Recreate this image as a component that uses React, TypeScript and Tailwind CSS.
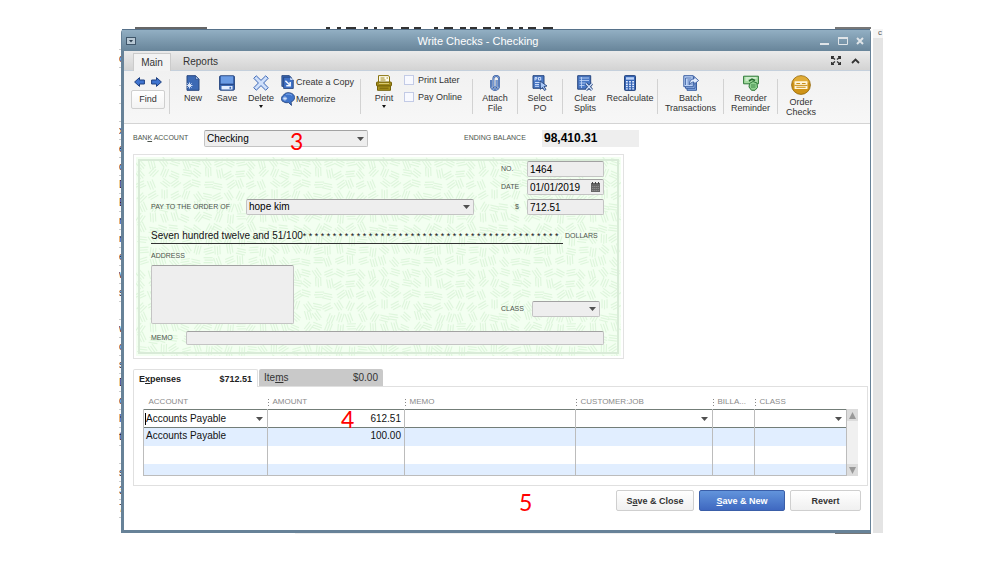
import type { ReactNode } from 'react';

const edgeLetters = [
  '', 'c', '', '', '', 'x', 'e', 'd', 'D', 'E', 'n', 'n', 'e', 'w', 's', '', 'w', 'c', 's', 'D', 'd', 'h', 't', '', 's', '3', '7',
];

// Repeatable scatter of three-line groups for the security paper background
const TILE = 110;
const CELL = 11;
const strokeGroups = Array.from({ length: 100 }, (_, i) => {
  const noise = (n: number) => Math.abs(Math.sin(i * 12.9898 + n * 78.233) * 43758.5453) % 1;
  return {
    x: (i % 10) * CELL + 4 + noise(1) * 4,
    y: Math.floor(i / 10) * CELL + 4 + noise(2) * 4,
    angle: Math.floor(noise(3) * 180),
  };
});

function CheckPattern() {
  return (
    <svg className="absolute inset-0 w-full h-full" aria-hidden="true">
      <defs>
        <pattern id="check-pattern" width={TILE} height={TILE} patternUnits="userSpaceOnUse">
          <rect width={TILE} height={TILE} fill="#f3fff1" />
          {strokeGroups.map(({ x, y, angle }, i) => (
            <g key={i} transform={`translate(${x} ${y}) rotate(${angle})`} stroke="#def6dc" strokeWidth="1.1">
              <path d="M-5 -2.5H4M-4 0H5M-5 2.5H4" />
            </g>
          ))}
        </pattern>
      </defs>
      <rect width="100%" height="100%" fill="url(#check-pattern)" />
    </svg>
  );
}

function Caret({ className = '' }: { className?: string }) {
  return (
    <svg className={className} width="7" height="4" viewBox="0 0 7 4" aria-hidden="true">
      <path d="M0 0h7L3.5 4z" fill="#505050" />
    </svg>
  );
}

interface SelectBoxProps {
  id: string;
  label?: string;
  value: string;
  className: string;
  plain?: boolean;
}

function SelectBox({ id, label, value, className, plain }: SelectBoxProps) {
  return (
    <div className={`relative ${className}`}>
      <select
        id={id}
        aria-label={label}
        defaultValue={value}
        className={`block w-full h-full appearance-none text-[10px] leading-3 outline-none ${
          plain ? 'bg-transparent' : 'px-0.5 bg-[#eee] border border-[#c4c4c4] border-t-[#a2a2a2] rounded-xs'
        }`}
      >
        <option value={value}>{value}</option>
      </select>
      <Caret className="absolute right-1 top-1/2 -translate-y-1/2 pointer-events-none" />
    </div>
  );
}

const fieldClass =
  'block h-4 px-0.5 text-[10px] leading-3 bg-[#eee] border border-[#c4c4c4] border-t-[#a2a2a2] rounded-xs outline-none';
const labelClass = 'text-[7px] text-[#4c544c] whitespace-nowrap';

interface ToolButtonProps {
  icon: ReactNode;
  lines: string[];
  className: string;
  menu?: boolean;
}

function ToolButton({ icon, lines, className, menu }: ToolButtonProps) {
  return (
    <button type="button" className={`shrink-0 flex flex-col items-center ${className}`}>
      {icon}
      <span className="flex flex-col items-center mt-0.5 text-[9px] leading-[10px] text-[#333] whitespace-nowrap">
        {lines.map((line) => (
          <span key={line}>{line}</span>
        ))}
      </span>
      {menu && (
        <svg className="mt-0.5" width="4" height="3" viewBox="0 0 4 3" aria-hidden="true">
          <path d="M0 0h4L2 3z" fill="#111" />
        </svg>
      )}
    </button>
  );
}

function Divider() {
  return <div className="shrink-0 w-px h-[35px] mt-1 bg-[#d2d2d2]" />;
}

function Icon({ children, size = 16 }: { children: ReactNode; size?: number }) {
  return (
    <svg className="shrink-0" width={size} height={size} viewBox="0 0 16 16" fill="none" aria-hidden="true">
      {children}
    </svg>
  );
}

function NewIcon() {
  return (
    <Icon>
      <path d="M2 .7h8.5L14 4.3v11H2z" fill="#3c69b4" stroke="#27467f" />
      <path d="M10.5 .7v3.6H14z" fill="#a9c4ee" stroke="#27467f" strokeWidth=".7" />
      <path d="M4.500 7.500v6M1.500 10.500h6M2.400 8.400l4.200 4.200M6.600 8.400l-4.200 4.200" stroke="#e6efff" strokeWidth=".9" />
    </Icon>
  );
}

function SaveIcon() {
  return (
    <Icon>
      <rect x=".6" y=".8" width="14.8" height="14.4" rx="1" fill="#3c69b4" stroke="#27467f" />
      <path d="M2 1.3h12v7.400H2z" fill="#6a9be4" />
      <path d="M1 9.4h14" stroke="#274a8c" strokeWidth="1.2" />
      <path d="M2.500 11h11v3.500h-11z" fill="#e3edff" />
      <path d="M10.500 11.800h1.6v2h-1.600z" fill="#3c69b4" />
    </Icon>
  );
}

function DeleteIcon() {
  return (
    <Icon>
      <path
        d="M3.3 .8 8 5.4 12.7 .8l2.5 2.5L10.6 8l4.6 4.7-2.5 2.5L8 10.6l-4.7 4.6-2.5-2.5L5.4 8 .8 3.3z"
        fill="#cfe0fb"
        stroke="#3a65b5"
        strokeLinejoin="round"
      />
    </Icon>
  );
}

function CopyIcon() {
  return (
    <Icon size={14}>
      <path d="M1 .7h8.500l2 2V13H1z" fill="#3c69b4" stroke="#27467f" />
      <path d="M3 2.500h7.500L14 5.700v9.700H3z" fill="#3f70c4" stroke="#27467f" />
      <path d="M10.500 2.500v3.200H14z" fill="#c8dbfa" />
      <path d="M5 6.500l5 5M10.500 8v4.200H6" stroke="#f2f7ff" strokeWidth="1.700" />
    </Icon>
  );
}

function MemorizeIcon() {
  return (
    <Icon size={14}>
      <path
        d="M8 .8C12.500 .8 15.500 3 15.500 6.300 15.500 9 13.500 10.800 11.500 11.300L12 15.300 8.500 12C6.500 12.500 4.500 12.300 3.300 11.300 1.300 11 .4 9.500 .5 7.500 .6 5.500 1.800 4.300 3 3.500 4 1.800 5.800 .8 8 .8z"
        fill="#3f74ca"
        stroke="#27467f"
      />
      <path d="M6 2.800c2-.8 5-.4 6.500 1" stroke="#8db4f0" />
      <path d="M4.500 5v5M2 7.500h5M2.800 5.800l3.400 3.400M6.200 5.800 2.800 9.200" stroke="#dbe8ff" strokeWidth=".9" />
    </Icon>
  );
}

function PrintIcon() {
  return (
    <Icon>
      <path d="M2.500 .6h10L13.500 2v5.500h-11z" fill="#fffdf0" stroke="#8a7410" />
      <path d="M4.500 3h4M4.500 5h5M10.500 3h1.500" stroke="#a08a1a" />
      <rect x=".5" y="7" width="15" height="4" rx=".8" fill="#a08a1a" stroke="#75620a" />
      <path d="M3 8.500h10" stroke="#e6d98a" strokeWidth=".8" />
      <path d="M1.500 11h13v4.300h-13z" fill="#a8921c" stroke="#75620a" />
      <path d="M3.500 13.200h9" stroke="#75620a" />
    </Icon>
  );
}

function AttachIcon() {
  const clip = 'M4 5v6a4 4 0 0 0 8 0V3.800a2.800 2.800 0 0 0-5.600 0V11a1.600 1.600 0 0 0 3.200 0V5';
  return (
    <Icon>
      <path d={clip} stroke="#2f5394" strokeWidth="1.900" />
      <path d={clip} stroke="#8fb4ee" strokeWidth=".8" />
    </Icon>
  );
}

function SelectIcon() {
  return (
    <Icon>
      <path d="M1 .7h11v12.600H1z" fill="#4a78c4" stroke="#27467f" />
      <path d="M3 5.500V2.500h1.800v1.500H3M6.500 2.500h2.200v2.500H6.500zM3 7.500h7M3 9.500h4M3 11.300h4" stroke="#d7e5ff" strokeWidth=".9" />
      <path d="M8 6l7 5-3 .5 2 3-1.600 1-1.900-3.100-2 2z" fill="#a9c8f7" stroke="#27467f" strokeWidth=".9" />
    </Icon>
  );
}

function ClearIcon() {
  return (
    <Icon>
      <path d="M.7 .7h13v13.500h-13z" fill="#4a78c4" stroke="#27467f" />
      <path d="M2.500 3h9.500M2.500 5.500h9.500M2.500 8h6M2.500 10.500h5M4.500 2v11" stroke="#c3d8fa" strokeWidth=".8" />
      <path d="M9 8.500l6 6.500M15 8.500 9 15" stroke="#27467f" strokeWidth="2.800" />
      <path d="M9 8.500l6 6.500M15 8.500 9 15" stroke="#d5e4fc" strokeWidth="1.300" />
    </Icon>
  );
}

function CalculatorIcon() {
  return (
    <Icon>
      <rect x="2.500" y=".6" width="11" height="14.800" rx=".8" fill="#3665b6" stroke="#27467f" />
      <path d="M4 2.200h8v2.500H4z" fill="#b9d1f8" />
      <path d="M4.900 6v8.500M8 6v8.500M11.100 6v8.500" stroke="#e0ebff" strokeWidth="1.800" strokeDasharray="1.500 .9" />
    </Icon>
  );
}

function BatchIcon() {
  return (
    <Icon>
      <path d="M4 4h9.500v11.300H4z" fill="#82a8e4" stroke="#3a5ea0" />
      <path d="M2.500 2.300H12v11H2.500z" fill="#9dbdf0" stroke="#3a5ea0" />
      <path d="M.8 .7h9.500v11H.8z" fill="#bcd3f7" stroke="#3a5ea0" />
      <path d="M2.500 3v7M2.500 3h6M4.500 5h4M4.500 7h3M4.500 9h5" stroke="#3a5ea0" strokeWidth=".8" />
      <path d="M6.500 9.500C6.500 5.500 8.500 4 11 4V1.500l4.600 4L11 9.300V7C9 7 8 7.500 6.500 9.500z" fill="#e2edff" stroke="#3a5ea0" strokeWidth=".9" />
    </Icon>
  );
}

function ReorderIcon() {
  return (
    <Icon>
      <path d="M.6 1.200h14.800v7.600H.6z" fill="#a5dba1" stroke="#2f7a39" />
      <path d="M2.500 3h11M2.500 5h3" stroke="#fff" strokeWidth=".9" />
      <path d="M6 6l3-1.800 3 1.300" stroke="#246b30" strokeWidth="1.500" />
      <path d="M6.500 8.500 10 6.500l4 1.500.5 4.500-2.500 2.800H8.500L6 12z" fill="#8fd08f" stroke="#2f7a39" />
      <path d="M8 10h4.500M8 12h4.500" stroke="#3f8a48" />
    </Icon>
  );
}

function OrderIcon() {
  return (
    <Icon size={20}>
      <circle cx="8" cy="8" r="7.500" fill="#cf9316" stroke="#96690a" strokeWidth=".7" />
      <path d="M1.500 6a6.700 6.700 0 0 1 13 0z" fill="#e0ac38" />
      <rect x="2.800" y="5" width="10.400" height="6.200" rx=".5" fill="#fff6da" />
      <path d="M4.300 6.800h3M8.700 6.800h3M2.800 8.300h10.400M4.300 9.800h7.400" stroke="#c98f17" strokeWidth=".8" />
    </Icon>
  );
}

function Arrow({ flip }: { flip?: boolean }) {
  return (
    <svg className={flip ? '-scale-x-100' : ''} width="11" height="10" viewBox="0 0 11 10" aria-hidden="true">
      <path d="M.6 5 5.500 .6v2.400h4.900v4H5.500v2.400z" fill="#3f74d0" stroke="#1f4080" strokeLinejoin="round" />
    </svg>
  );
}

function Toolbar() {
  return (
    <div className="flex items-start h-[53px] pt-1 pl-[7px] bg-linear-to-b from-[#f1f1f1] to-[#f7f7f7] border-b border-[#d4d4d4]">
      <div className="shrink-0 w-[34px] pt-px">
        <div className="flex justify-between h-3 px-[3px]">
          <button type="button" aria-label="Previous"><Arrow /></button>
          <button type="button" aria-label="Next"><Arrow flip /></button>
        </div>
        <button
          type="button"
          className="block w-full h-[19px] mt-0.5 text-[9px] text-[#333] bg-linear-to-b from-white to-[#f3f3f3] border border-[#cfcfcf] rounded-xs"
        >
          Find
        </button>
      </div>
      <div className="w-1" />
      <Divider />
      <ToolButton className="w-[34px] ml-1.5" icon={<NewIcon />} lines={['New']} />
      <ToolButton className="w-[34px]" icon={<SaveIcon />} lines={['Save']} />
      <ToolButton className="w-[34px]" icon={<DeleteIcon />} lines={['Delete']} menu />
      <div className="shrink-0 flex flex-col gap-[3px] w-[79px] ml-[3px] text-[9px] leading-[14px] text-[#333] whitespace-nowrap">
        <button type="button" className="flex items-center gap-px"><CopyIcon />Create a Copy</button>
        <button type="button" className="flex items-center gap-px"><MemorizeIcon />Memorize</button>
      </div>
      <Divider />
      <ToolButton className="w-[34px] ml-1.5" icon={<PrintIcon />} lines={['Print']} menu />
      <div className="shrink-0 flex flex-col gap-[7px] w-[68px] ml-[3px] text-[9px] leading-[10px] text-[#333] whitespace-nowrap">
        <label className="flex items-center gap-1">
          <input type="checkbox" className="appearance-none size-2.5 bg-[#f8f9ff] border border-[#c3cbe6]" />
          Print Later
        </label>
        <label className="flex items-center gap-1">
          <input type="checkbox" className="appearance-none size-2.5 bg-[#f8f9ff] border border-[#c3cbe6]" />
          Pay Online
        </label>
      </div>
      <Divider />
      <ToolButton className="w-11" icon={<AttachIcon />} lines={['Attach', 'File']} />
      <Divider />
      <ToolButton className="w-11" icon={<SelectIcon />} lines={['Select', 'PO']} />
      <Divider />
      <ToolButton className="w-11" icon={<ClearIcon />} lines={['Clear', 'Splits']} />
      <ToolButton className="w-[46px] mr-1" icon={<CalculatorIcon />} lines={['Recalculate']} />
      <Divider />
      <ToolButton className="w-[65px]" icon={<BatchIcon />} lines={['Batch', 'Transactions']} />
      <Divider />
      <ToolButton className="w-[53px]" icon={<ReorderIcon />} lines={['Reorder', 'Reminder']} />
      <Divider />
      <ToolButton className="w-[46px]" icon={<OrderIcon />} lines={['Order', 'Checks']} />
    </div>
  );
}

function CheckForm() {
  return (
    <div className="w-full max-w-[491px] mt-[7px] p-0.5 bg-white border border-[#e2e2e2]">
      <div className="relative p-0.5">
        <CheckPattern />
        <div className="relative pl-[11px] pr-[13px] pb-[7px] border-2 border-[#d9ebd8]">
          <div className="flex justify-end items-center">
            <label htmlFor="check-no" className={`w-[26px] ${labelClass}`}>NO.</label>
            <input id="check-no" defaultValue="1464" className={`w-[77px] ${fieldClass}`} />
          </div>
          <div className="flex justify-end items-center mt-0.5">
            <label htmlFor="check-date" className={`w-[26px] ${labelClass}`}>DATE</label>
            <div className="relative">
              <input id="check-date" defaultValue="01/01/2019" className={`w-[77px] ${fieldClass}`} />
              <svg className="absolute right-1 top-[3px]" width="9" height="10" viewBox="0 0 9 10" aria-hidden="true">
                <path d="M0 1h9v9H0z" fill="#666" />
                <path d="M1.500 0v2M4.500 0v2M7.500 0v2" stroke="#444" />
                <path d="M1 4.500h7M1 6.500h7M1 8.500h7" stroke="#999" strokeWidth=".7" strokeDasharray="1.500 .5" />
              </svg>
            </div>
          </div>
          <div className="flex items-center mt-1">
            <label htmlFor="payee" className={`w-[95px] ${labelClass}`}>PAY TO THE ORDER OF</label>
            <SelectBox id="payee" value="hope kim" className="flex-1 h-4" />
            <label htmlFor="check-amount" className={`w-[53px] pr-2 text-right ${labelClass}`}>$</label>
            <input id="check-amount" defaultValue="712.51" className={`w-[77px] ${fieldClass}`} />
          </div>
          <div className="flex items-start mt-[13px]">
            <div className="flex items-end w-[412px] h-4 whitespace-nowrap border-b border-[#333] text-[10px] leading-[14px] text-[#111]">
              <span>Seven hundred twelve and 51/100</span>
              <span className="text-[9px]">{'* '.repeat(43)}</span>
            </div>
            <span className={`ml-0.5 leading-4 ${labelClass}`}>DOLLARS</span>
          </div>
          <label htmlFor="address" className={`block mt-[5px] leading-[14px] ${labelClass}`}>ADDRESS</label>
          <div className="flex items-end justify-between mt-0.5">
            <textarea
              id="address"
              className="block w-[143px] h-[59px] resize-none bg-[#eee] border border-[#c4c4c4] border-t-[#a2a2a2] rounded-xs outline-none"
            />
            <div className="flex items-center mb-[7px] mr-1">
              <label htmlFor="check-class" className={`w-[31px] ${labelClass}`}>CLASS</label>
              <SelectBox id="check-class" value="" className="w-[68px] h-4" />
            </div>
          </div>
          <div className="flex items-center mt-[7px]">
            <label htmlFor="memo" className={`w-[35px] ${labelClass}`}>MEMO</label>
            <input
              id="memo"
              className="block flex-1 h-3.5 bg-[#eee] border border-[#c4c4c4] border-t-[#a2a2a2] rounded-xs outline-none"
            />
          </div>
        </div>
      </div>
    </div>
  );
}

function HeaderCell({ children, first }: { children: ReactNode; first?: boolean }) {
  return (
    <th scope="col" className="p-0 align-middle text-left font-normal text-[8px] leading-[14px] text-[#8a8a8a]">
      <div className="flex items-center">
        {first ? (
          <span className="w-[5px]" />
        ) : (
          <span className="flex flex-col gap-0.5 mr-1">
            <span className="size-px bg-[#888]" />
            <span className="size-px bg-[#888]" />
            <span className="size-px bg-[#888]" />
          </span>
        )}
        {children}
      </div>
    </th>
  );
}

function ExpensesTable() {
  const cell = 'p-0 border-x border-[#bcbcbc]';

  return (
    <div className="flex pt-2 px-[9px] pb-[9px] border border-t-0 border-[#e0e0e0]">
      <table className="flex-1 table-fixed border-collapse text-[10px] leading-3 text-[#111]">
        <colgroup>
          <col className="w-[124px]" />
          <col className="w-[137px]" />
          <col />
          <col className="w-[137px]" />
          <col className="w-[42px]" />
          <col className="w-[92px]" />
        </colgroup>
        <thead>
          <tr>
            <HeaderCell first>ACCOUNT</HeaderCell>
            <HeaderCell>AMOUNT</HeaderCell>
            <HeaderCell>MEMO</HeaderCell>
            <HeaderCell>CUSTOMER:JOB</HeaderCell>
            <HeaderCell>BILLA...</HeaderCell>
            <HeaderCell>CLASS</HeaderCell>
          </tr>
        </thead>
        <tbody>
          <tr className="h-[18px] border border-[#737d78]">
            <td className={cell}>
              <div className="flex items-center pl-px">
                <span className="w-px h-3 bg-black" />
                <SelectBox id="row-account" label="Account" value="Accounts Payable" className="flex-1 h-3" plain />
              </div>
            </td>
            <td className={cell}>
              <input
                aria-label="Amount"
                defaultValue="612.51"
                className="block w-full h-3 pr-[3px] text-right bg-transparent outline-none"
              />
            </td>
            <td className={cell}>
              <input aria-label="Memo" className="block w-full h-3 bg-transparent outline-none" />
            </td>
            <td className={cell}>
              <SelectBox id="row-customer" label="Customer:Job" value="" className="h-3" plain />
            </td>
            <td className={cell} />
            <td className={cell}>
              <SelectBox id="row-class" label="Class" value="" className="h-3" plain />
            </td>
          </tr>
          <tr className="h-[18px] bg-[#e1eeff]">
            <td className={`${cell} pl-0.5 pb-0.5`}>Accounts Payable</td>
            <td className={`${cell} pr-[3px] pb-0.5 text-right`}>100.00</td>
            <td className={cell} />
            <td className={cell} />
            <td className={cell} />
            <td className={cell} />
          </tr>
          <tr className="h-[18px]">
            <td className={cell} />
            <td className={cell} />
            <td className={cell} />
            <td className={cell} />
            <td className={cell} />
            <td className={cell} />
          </tr>
          <tr className="h-3 bg-[#e1eeff] border-b border-[#bcbcbc]">
            <td className={cell} />
            <td className={cell} />
            <td className={cell} />
            <td className={cell} />
            <td className={cell} />
            <td className={cell} />
          </tr>
        </tbody>
      </table>
      <div className="flex flex-col justify-between w-[11px] mt-3.5 bg-[#f0f0f0]">
        <button type="button" aria-label="Scroll up" className="flex items-center justify-center h-3 bg-[#dcdcdc]">
          <svg width="7" height="7" viewBox="0 0 7 7"><path d="M3.500 0 7 7H0z" fill="#999" /></svg>
        </button>
        <button type="button" aria-label="Scroll down" className="flex items-center justify-center h-3 bg-[#dcdcdc]">
          <svg width="7" height="7" viewBox="0 0 7 7"><path d="M3.500 7 7 0H0z" fill="#999" /></svg>
        </button>
      </div>
    </div>
  );
}

function CheckWindow() {
  return (
    <div className="relative flex-1 min-w-0 bg-white border-l-3 border-b-3 border-r border-[#678298] rounded-t-sm">
      <div className="flex items-center h-[22px] -ml-0.5 pl-1 pr-1.5 bg-linear-to-b from-[#92afc3] to-[#68859a] border-t border-[#56718a]">
        <button type="button" aria-label="Window menu">
          <svg width="10" height="8" viewBox="0 0 10 8">
            <rect x=".5" y=".5" width="9" height="7" fill="#b8c8d4" stroke="#3f566a" />
            <path d="M3 3h4L5 5.500z" fill="#2c3f50" />
          </svg>
        </button>
        <h1 className="flex-1 text-center text-[11px] leading-4 text-white">Write Checks - Checking</h1>
        <div className="flex items-center gap-2">
          <button type="button" aria-label="Minimize">
            <svg width="10" height="8" viewBox="0 0 10 8"><path d="M0 7h9" stroke="#dfe4e8" strokeWidth="2" /></svg>
          </button>
          <button type="button" aria-label="Maximize">
            <svg width="10" height="8" viewBox="0 0 10 8">
              <path d="M.5 1h9v6.500h-9z" fill="none" stroke="#dfe4e8" />
              <path d="M0 1h10" stroke="#dfe4e8" strokeWidth="2" />
            </svg>
          </button>
          <button type="button" aria-label="Close">
            <svg width="8" height="8" viewBox="0 0 8 8"><path d="M1 1l6 6M7 1 1 7" stroke="#dfe4e8" strokeWidth="2" /></svg>
          </button>
        </div>
      </div>

      {/* Ribbon tabs */}
      <div className="flex items-end h-5 pl-[9px] pr-2.5 bg-linear-to-b from-[#ebebeb] to-[#d3d3d3] border-b border-[#c5d0dc] text-[10px] text-[#333]">
        <button type="button" className="w-[38px] h-[18px] -mb-px bg-[#f3f3f3] border-x border-t border-[#cbcbcb]">
          Main
        </button>
        <button type="button" className="h-[18px] ml-3">Reports</button>
        <div className="flex-1" />
        <div className="flex items-center gap-2.5 h-full">
          <button type="button" aria-label="Expand">
            <svg width="10" height="9" viewBox="0 0 10 9" fill="none" stroke="#333" strokeWidth="1.300">
              <path d="M.6 3V.6H3M7 .6h2.400V3M9.400 6v2.400H7M3 8.400H.6V6M1 1l3 2.500M9 1 6 3.500M9 8 6 5.500M1 8l3-2.500" />
            </svg>
          </button>
          <button type="button" aria-label="Collapse">
            <svg width="9" height="6" viewBox="0 0 9 6"><path d="M1 5l3.500-3.500L8 5" fill="none" stroke="#333" strokeWidth="1.800" /></svg>
          </button>
        </div>
      </div>

      <Toolbar />

      <div className="pt-1.5 pl-[9px] pr-0.5 pb-[19px]">
        <div className="flex items-center">
          <label htmlFor="bank-account" className={`w-[71px] ${labelClass}`}>BAN<u>K</u> ACCOUNT</label>
          <SelectBox id="bank-account" value="Checking" className="w-[164px] h-[17px]" />
          <span className={`ml-24 w-[78px] ${labelClass}`}>ENDING BALANCE</span>
          <output className="w-[97px] h-[17px] pl-0.5 bg-[#eee] text-[12px] leading-4 font-bold text-black">98,410.31</output>
        </div>

        <CheckForm />

        {/* Expense / item tabs */}
        <div className="flex h-[18px] mt-2.5 text-[10px] leading-3 text-[#333]">
          <button
            type="button"
            className="flex items-center justify-between w-[125px] px-[5px] border border-b-0 border-[#e0e0e0] rounded-t-xs text-[9px] font-bold text-[#222]"
          >
            <span>E<u>x</u>penses</span>
            <span>$712.51</span>
          </button>
          <div className="flex flex-1 pl-px border-b border-[#e0e0e0]">
            <button type="button" className="flex items-center justify-between w-[124px] px-[5px] bg-[#c9c9c9] rounded-t-xs">
              <span>Ite<u>m</u>s</span>
              <span>$0.00</span>
            </button>
          </div>
        </div>
        <ExpensesTable />

        <div className="flex justify-end gap-[5px] mt-1 pr-[7px] text-[9px] leading-3 font-bold text-[#333]">
          <button type="button" className="w-[78px] h-[21px] bg-linear-to-b from-white to-[#f0f0f0] border border-[#cfcfcf] rounded-xs">
            S<u>a</u>ve &amp; Close
          </button>
          <button type="button" className="w-[86px] h-[21px] bg-linear-to-b from-[#6294dc] to-[#3f68c0] border border-[#3a5ea8] rounded-xs text-white">
            <u>S</u>ave &amp; New
          </button>
          <button type="button" className="w-[71px] h-[21px] bg-linear-to-b from-white to-[#f0f0f0] border border-[#cfcfcf] rounded-xs">
            Revert
          </button>
        </div>
      </div>

      {/* Step numbers laid over the window */}
      <span className="absolute left-[166px] top-[98px] font-[Lato,sans-serif] text-[23px] leading-7 text-[#f00]">3</span>
      <span className="absolute left-[217px] top-[376px] font-[Lato,sans-serif] text-[23px] leading-7 text-[#f00]">4</span>
      <span className="absolute left-[395px] top-[459px] font-[Lato,sans-serif] text-[23px] leading-7 text-[#f00]">5</span>
    </div>
  );
}

export default function App() {
  return (
    <div className="min-h-screen pl-[119px] pr-[116px] pt-[27px] bg-white font-['Liberation_Sans',Arial,sans-serif]">
      {/* Slivers of the report that sits behind the check window */}
      <div className="flex h-0.5" aria-hidden="true">
        <div className="w-[72px] h-0.5 ml-4 bg-[#666]" />
        <svg className="ml-[119px]" width="230" height="2" viewBox="0 0 230 2">
          <path
            d="M0 1h4M11 1h4M20 1h10M38 1h4M48 1h3M58 1h9M75 1h8M88 1h7M108 1h4M118 1h9M134 1h6M144 1h7M157 1h8M169 1h5M181 1h6M193 1h4M202 1h8M217 1h10"
            stroke="#333"
            strokeWidth="2"
          />
        </svg>
        <div className="flex-1" />
        <div className="w-9 h-0.5 mr-3 bg-[#777]" />
      </div>
      <div className="flex">
        <div className="w-0.5 pt-[3px] overflow-hidden" aria-hidden="true">
          {edgeLetters.map((letter, index) => (
            <div key={index} className="h-[18px] border-b border-[#ccc] text-[10px] leading-[18px] text-[#223]">
              {letter}
            </div>
          ))}
        </div>
        <CheckWindow />
        <div className="w-3 flex flex-col pl-0.5" aria-hidden="true">
          <div className="h-[9px] bg-[#f5f5f5] pr-px text-right text-[8px] leading-[7px] text-[#555]">c</div>
          <div className="flex-1 bg-[#e4e4e4]" />
        </div>
      </div>
      <div className="flex justify-end h-px pr-3">
        <div className="flex-1 ml-44 bg-[#eee]" />
        <div className="w-9 bg-[#777]" />
      </div>
    </div>
  );
}
